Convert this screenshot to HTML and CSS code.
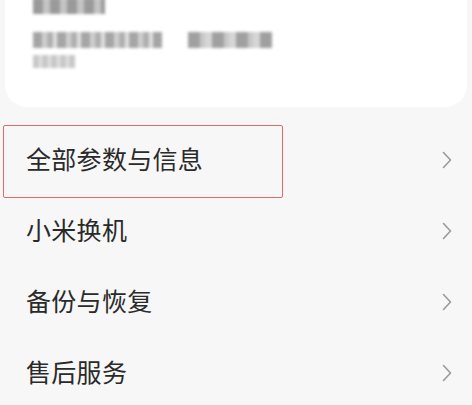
FILE: index.html
```html
<!DOCTYPE html>
<html lang="zh">
<head>
  <meta charset="UTF-8">
  <title>我的设备</title>
  <link rel="stylesheet" href="styles.css">
</head>
<body>

  <div class="device-card">
    <div class="blur-row row-name">
      <span class="blur b1"></span>
    </div>
    <div class="blur-row row-spec">
      <span class="blur b2"></span>
      <span class="blur b3"></span>
    </div>
    <div class="blur-row row-note">
      <span class="blur b4"></span>
    </div>
  </div>

  <ul class="menu">
    <li class="menu-item highlighted">
      <span class="label">全部参数与信息</span>
      <svg class="chevron" viewBox="0 0 10 18"><path d="M1.5 1.5 L8.5 9 L1.5 16.5" /></svg>
    </li>
    <li class="menu-item">
      <span class="label">小米换机</span>
      <svg class="chevron" viewBox="0 0 10 18"><path d="M1.5 1.5 L8.5 9 L1.5 16.5" /></svg>
    </li>
    <li class="menu-item">
      <span class="label">备份与恢复</span>
      <svg class="chevron" viewBox="0 0 10 18"><path d="M1.5 1.5 L8.5 9 L1.5 16.5" /></svg>
    </li>
    <li class="menu-item">
      <span class="label">售后服务</span>
      <svg class="chevron" viewBox="0 0 10 18"><path d="M1.5 1.5 L8.5 9 L1.5 16.5" /></svg>
    </li>
  </ul>

</body>
</html>
```

FILE: styles.css
```css
body {
  margin: 0;
  background: #f7f7f7;
  font-family: "Noto Sans CJK SC", "Noto Sans", sans-serif;
  color: #2a2a2a;
  overflow: hidden;
}

.device-card {
  margin: -40px 5px 0 5px;
  height: 147px;
  background: #fff;
  border-radius: 22px;
  padding: 0 28px;
  box-sizing: border-box;
  position: relative;
}

.blur-row {
  display: flex;
  gap: 26px;
  position: absolute;
  left: 28px;
}

.row-name { top: 38px; }
.row-spec { top: 72px; }
.row-note { top: 95px; }

.blur {
  display: block;
  filter: blur(1.5px);
}

.b1 {
  width: 72px;
  height: 16px;
  background: repeating-linear-gradient(90deg, #9a9a9a 0 10px, #c4c4c4 10px 17px);
}

.b2 {
  width: 129px;
  height: 16px;
  background: repeating-linear-gradient(90deg, #a5a5a5 0 9px, #cfcfcf 9px 14px, #b0b0b0 14px 20px, #e0e0e0 20px 24px);
}

.b3 {
  width: 84px;
  height: 16px;
  background: repeating-linear-gradient(90deg, #a0a0a0 0 12px, #c8c8c8 12px 17px, #d6d6d6 17px 24px);
}

.b4 {
  width: 42px;
  height: 13px;
  background: repeating-linear-gradient(90deg, #c8c8c8 0 6px, #e2e2e2 6px 9px);
}

.menu {
  list-style: none;
  margin: 17px 0 0 0;
  padding: 0;
}

.menu-item {
  height: 71px;
  display: flex;
  align-items: center;
  justify-content: space-between;
  padding: 0 20px 0 26px;
  position: relative;
}

.label {
  font-size: 25px;
  letter-spacing: 0.3px;
  margin-top: -4px;
}

.chevron {
  width: 10px;
  height: 18px;
  fill: none;
  stroke: #9a9a9a;
  stroke-width: 1.6;
  stroke-linecap: round;
  stroke-linejoin: round;
}

.highlighted::after {
  content: "";
  position: absolute;
  left: 3px;
  top: 1px;
  width: 280px;
  height: 73px;
  border: 1.5px solid #e06b6b;
  border-radius: 2px;
  box-sizing: border-box;
}
```
